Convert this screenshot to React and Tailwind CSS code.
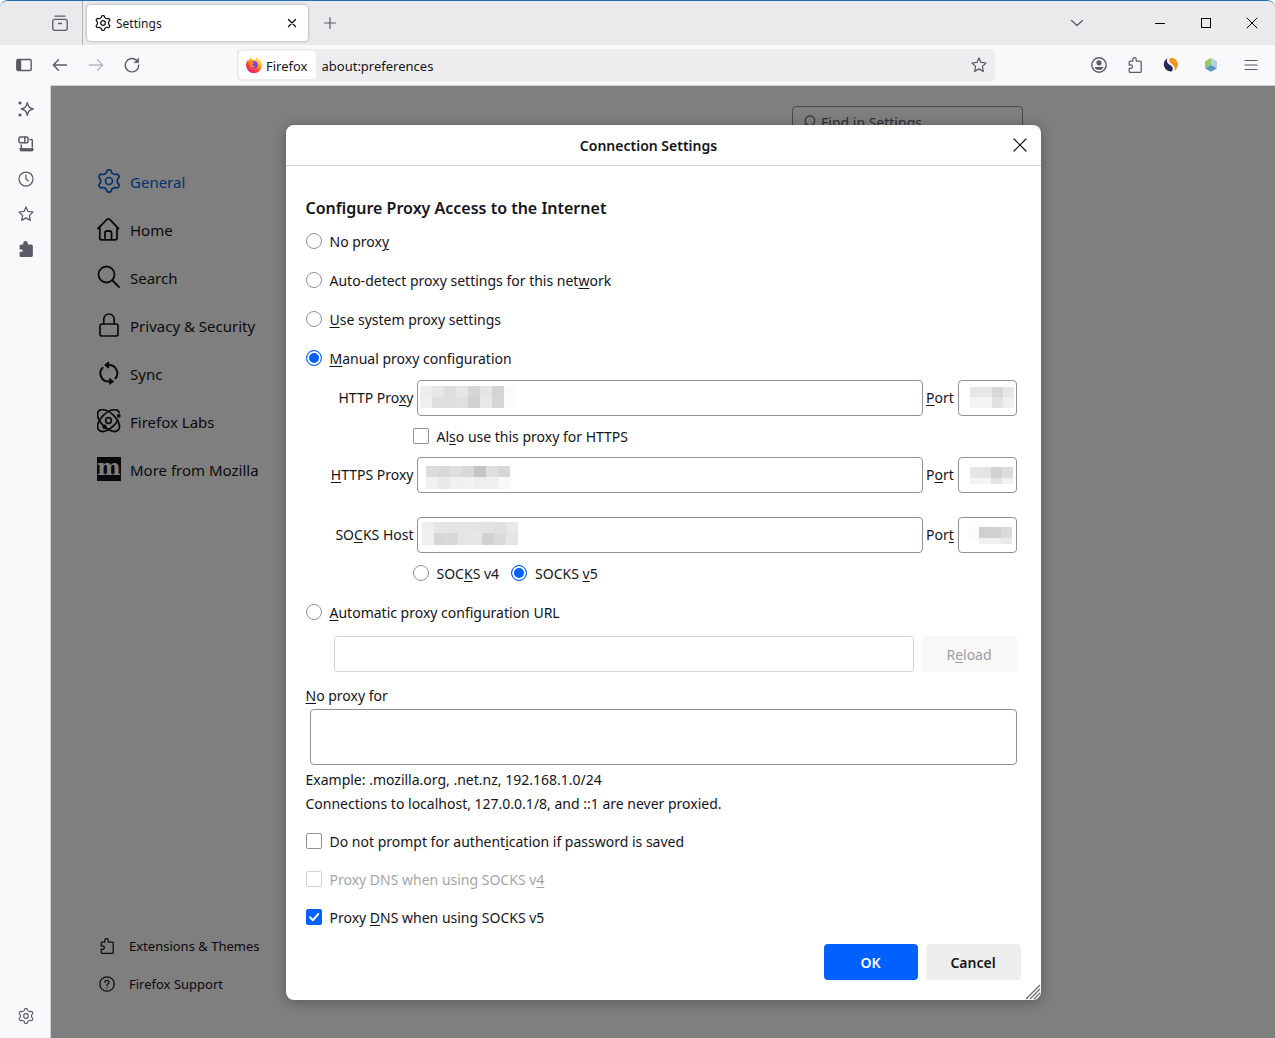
import React from "react";

const gearPath = (() => {
  const pts = [];
  for (let i = 0; i < 96; i++) {
    const a = (i / 96) * Math.PI * 2;
    const r = 9.8 + 1.5 * Math.tanh(1.9 * (Math.cos(6 * a) - 0.15));
    pts.push(`${(12 + r * Math.sin(a)).toFixed(2)} ${(12 - r * Math.cos(a)).toFixed(2)}`);
  }
  return `M${pts.join("L")}Z`;
})();

function Icon({ size = 16, box = 16, sw = 1.25, className = "", children }) {
  return (
    <svg
      width={size}
      height={size}
      viewBox={`0 0 ${box} ${box}`}
      fill="none"
      stroke="currentColor"
      strokeWidth={sw}
      strokeLinecap="round"
      strokeLinejoin="round"
      aria-hidden="true"
      className={`shrink-0 ${className}`}
    >
      {children}
    </svg>
  );
}

const Gear = ({ size = 16, sw = 2 }) => (
  <Icon size={size} box={24} sw={sw}>
    <path d={gearPath} />
    <circle cx="12" cy="12" r="3.5" />
  </Icon>
);

const Star = () => (
  <Icon>
    <path d="M8 .9 10 5.4l5 .6-3.6 3.4.9 5-4.3-2.500-4.3 2.500.9-5L1 6l5-.6z" />
  </Icon>
);

const puzzle = "M2.2 5.600V5c0-.6.4-1 1-1h2.600V2.400a1.700 1.700 0 0 1 3.400 0V4h4c.6 0 1 .4 1 1v9.400c0 .6-.4 1-1 1h-10c-.6 0-1-.4-1-1v-3h1.400a1.700 1.700 0 0 0 0-3.500H2.200z";

const Puzzle = ({ filled }) => (
  <Icon>
    <path d={puzzle} fill={filled ? "currentColor" : "none"} />
  </Icon>
);

const FirefoxLogo = () => (
  <svg width="16" height="16" viewBox="0 0 16 16" aria-hidden="true" className="shrink-0">
    <defs>
      <linearGradient id="flame" x1="0.85" y1="0.05" x2="0.2" y2="0.95">
        <stop offset="0" stopColor="#fff36b" />
        <stop offset="0.35" stopColor="#ffae22" />
        <stop offset="0.65" stopColor="#ff4a37" />
        <stop offset="1" stopColor="#e31587" />
      </linearGradient>
    </defs>
    <path
      d="M1.3 3.2c.3.3.5.6.6.9.6-.7 1.4-1.2 2-1.5C4 1.500 4.500.7 4.900.5c0 .8.5 1.400 1.300 1.900L9.500 3c.2-1.300.8-2.300 1.600-3 .2 1.500 1.600 2.400 2.500 3.900.3-.3.3-.8.2-1.200C15.200 4 16 6 16 8.100A8 8 0 0 1 0 8.300c0-2.300.6-3.800 1.300-5.100z"
      fill="url(#flame)"
    />
    <circle cx="8.300" cy="7.800" r="3.500" fill="#7542e5" />
    <path d="M3.200 5.500c1.200-.6 2.300-.5 3.300.1l2 .3c-.3 1-1.600 1-2 1.600-.2 1.500 1.700 2 3.300 1.200-1.600 2.700-6 2-6.300-1z" fill="#ff8a1c" />
  </svg>
);

const U = ({ children }) => <span className="underline underline-offset-2">{children}</span>;

const Radio = ({ id, name, checked, children }) => (
  <label htmlFor={id} className="flex items-center gap-2">
    <input
      id={id}
      type="radio"
      name={name}
      defaultChecked={checked}
      className="size-4 shrink-0 appearance-none rounded-full border border-[#8f8f9d] bg-white checked:border-[#0061fe] checked:bg-[#0061fe] checked:shadow-[inset_0_0_0_2px_white]"
    />
    <span className="pt-0.5">{children}</span>
  </label>
);

const Check = ({ id, checked, disabled, children }) => (
  <label htmlFor={id} className={`flex items-center gap-2 ${disabled ? "opacity-40" : ""}`}>
    <span className="relative flex size-4 shrink-0">
      <input
        id={id}
        type="checkbox"
        defaultChecked={checked}
        disabled={disabled}
        className="peer size-4 appearance-none rounded-xs border border-[#8f8f9d] bg-white checked:border-[#0061fe] checked:bg-[#0061fe]"
      />
      <svg viewBox="0 0 16 16" aria-hidden="true" className="pointer-events-none absolute inset-0 hidden size-4 peer-checked:block">
        <path d="M4 8.300 7 11.200 12.300 5" fill="none" stroke="white" strokeWidth="2" strokeLinecap="round" strokeLinejoin="round" />
      </svg>
    </span>
    <span className="pt-0.5">{children}</span>
  </label>
);

const field = "block w-full rounded border border-[#8f8f9d] bg-white px-2";

function Mosaic({ rows, className }) {
  return (
    <span aria-hidden="true" className={`pointer-events-none absolute flex flex-col ${className}`}>
      {rows.map((row, i) => (
        <span key={i} className="flex min-h-0 flex-1">
          {row.map((c, j) => (
            <span key={j} className="flex-1" style={{ backgroundColor: c }} />
          ))}
        </span>
      ))}
    </span>
  );
}

function ProxyRow({ id, label, port, host, hostBox, portCells, portBox }) {
  return (
    <div className="flex items-center gap-[3px] pr-1">
      <label htmlFor={id} className="w-[108px] shrink-0 text-right">{label}</label>
      <div className="relative flex-1">
        <input id={id} type="text" className={`${field} h-9`} />
        <Mosaic rows={host} className={hostBox} />
      </div>
      <label htmlFor={`${id}-port`} className="w-[29px] shrink-0 text-center whitespace-nowrap">{port}</label>
      <div className="relative w-[59px] shrink-0">
        <input id={`${id}-port`} type="text" className={`${field} h-9`} />
        <Mosaic rows={portCells} className={portBox} />
      </div>
    </div>
  );
}

const categories = [
  ["General", <Gear size={24} sw={1.7} />],
  ["Home", (
    <Icon size={24} box={24} sw={1.8}>
      <path d="M1 11.500 10.100 2.400a1.800 1.800 0 0 1 2.600 0l8.800 9.100M2.800 10v11a1.800 1.800 0 0 0 1.800 1.800h13.600a1.800 1.800 0 0 0 1.800-1.800V10M8 22.500V16a2 2 0 0 1 2-2h2.500a2 2 0 0 1 2 2v6.500" />
    </Icon>
  )],
  ["Search", (
    <Icon size={24} box={24} sw={1.8}>
      <circle cx="9.500" cy="9.500" r="8" />
      <path d="m15.500 15.500 6.500 6.500" />
    </Icon>
  )],
  ["Privacy & Security", (
    <Icon size={24} box={24} sw={1.7}>
      <rect x="3" y="11" width="18" height="12" rx="2" />
      <path d="M6.800 11V6.200a5.200 5.200 0 0 1 10.400 0V11" />
    </Icon>
  )],
  ["Sync", (
    <Icon size={24} box={24} sw={2}>
      <path d="M12 4a8.200 8.200 0 0 1 6.500 13.300M12 20.500A8.200 8.200 0 0 1 5.600 6.700" />
      <path d="M11.500 1.200v5.600L8 4zM12.800 17.700v5.300l3.400-2.600z" fill="currentColor" strokeWidth="1.300" />
    </Icon>
  )],
  ["Firefox Labs", (
    <Icon size={24} box={24} sw={1.8}>
      <circle cx="11.500" cy="11.500" r="2.800" />
      <ellipse cx="11.500" cy="11.500" rx="13.600" ry="7.400" transform="rotate(-45 11.500 11.500)" pathLength="100" strokeDasharray="3 12 85" />
      <ellipse cx="11.500" cy="11.500" rx="13.600" ry="7.400" transform="rotate(45 11.500 11.500)" />
      <circle cx="7.500" cy="17.800" r="1.300" fill="currentColor" />
      <circle cx="21.800" cy="6.800" r="1" fill="currentColor" />
    </Icon>
  )],
  ["More from Mozilla", (
    <svg width="24" height="24" viewBox="0 0 24 24" aria-hidden="true" className="shrink-0 overflow-visible">
      <rect width="24" height="24" fill="#15141a" />
      <text x="12" y="18" textAnchor="middle" fontFamily="DejaVu Serif" fontWeight="700" fontSize="22" fill="#fff">m</text>
    </svg>
  )],
];

const iconButton = "flex size-8 items-center justify-center";

export default function App() {
  return (
    <div className="flex min-h-screen flex-col overflow-hidden rounded-t-lg border-t border-[#1a6fb5] bg-[#f9f9fb] font-['Noto_Sans',sans-serif] text-sm text-[#15141a]">
      <header className="flex h-11 items-center bg-[#eaeaec] text-[#5b5b66]">
        <div className="flex w-[83px] justify-end self-stretch border-r border-[#b5b5ba] pr-1.5">
          <button aria-label="View recent browsing" className="flex w-8 items-center justify-center">
            <Icon sw={1.3}>
              <rect x=".8" y="4.300" width="14.400" height="11" rx="2" />
              <path d="M3 1.200h10M6.500 8.500h3" />
            </Icon>
          </button>
        </div>
        <div className="ml-1 flex h-9 w-[221px] items-center gap-[5px] rounded bg-white pr-2 pl-2 text-[#15141a] shadow-[0_0_3px_rgba(0,0,0,0.35)]">
          <Gear sw={1.9} />
          <span className="flex-1 pt-0.5 text-xs">Settings</span>
          <button aria-label="Close tab" className="flex size-4 items-center justify-center">
            <Icon size={10} box={10} sw={1.4}><path d="m1.500 1.500 7 7m0-7-7 7" /></Icon>
          </button>
        </div>
        <button aria-label="New tab" className="ml-1.5 flex size-8 items-center justify-center">
          <Icon size={14} box={14} sw={1.2}><path d="M7 1.500v11M1.500 7h11" /></Icon>
        </button>
        <div className="flex-1" />
        <button aria-label="List all tabs" className="mr-11 flex size-8 items-center justify-center">
          <Icon size={14} box={14} sw={1.3}><path d="m1.500 4.500 5.500 5 5.500-5" /></Icon>
        </button>
        <div className="flex self-stretch text-black">
          <button aria-label="Minimize" className="flex w-[46px] items-center justify-center">
            <span className="h-px w-2.5 bg-black" />
          </button>
          <button aria-label="Maximize" className="flex w-[46px] items-center justify-center">
            <span className="size-2.5 border border-black" />
          </button>
          <button aria-label="Close" className="flex w-[46px] items-center justify-center">
            <Icon size={12} box={12} sw={1}><path d="m1 1 10 10m0-10L1 11" /></Icon>
          </button>
        </div>
      </header>

      <nav aria-label="Navigation" className="flex h-10 items-center pr-2 pl-2 text-[#5b5b66]">
        <div className="flex gap-1">
          <button aria-label="Sidebar" className={iconButton}>
            <Icon sw={1.4}>
              <rect x=".8" y="2.500" width="14.400" height="11" rx="1.500" />
              <path d="M1.500 3.500h3v9h-3z" fill="currentColor" />
            </Icon>
          </button>
          <button aria-label="Back" className={iconButton}>
            <Icon sw={1.4}><path d="M14.500 8H1.500M6.500 2.800 1.300 8l5.200 5.200" /></Icon>
          </button>
          <button aria-label="Forward" disabled className={`${iconButton} opacity-40`}>
            <Icon sw={1.4}><path d="M1.500 8h13M9.500 2.800 14.700 8l-5.200 5.200" /></Icon>
          </button>
          <button aria-label="Reload page" className={iconButton}>
            <Icon sw={1.4}>
              <path d="M14.700 8.200A6.700 6.700 0 1 1 12.500 3.200" />
              <path d="M14.700 1.200v4.500h-4.500z" fill="currentColor" strokeWidth=".5" />
            </Icon>
          </button>
        </div>
        <div className="ml-[89px] flex h-8 flex-1 items-center rounded bg-[#ededf0] text-[#15141a]">
          <div className="m-0.5 flex h-7 items-center gap-1 rounded bg-white pr-2 pl-[7px]">
            <FirefoxLogo />
            <span className="pt-0.5 text-[13px]">Firefox</span>
          </div>
          <input aria-label="Address" type="text" defaultValue="about:preferences" className="ml-1 min-w-0 flex-1 bg-transparent pt-0.5 text-[13px]" />
          <button aria-label="Bookmark this page" className={`${iconButton} text-[#5b5b66]`}><Star /></button>
        </div>
        <div className="ml-[88px] flex">
          <button aria-label="Account" className={iconButton}>
            <Icon sw={1.4}>
              <circle cx="8" cy="8" r="7.200" />
              <circle cx="8" cy="5.900" r="1.900" fill="currentColor" />
              <path d="M4.500 10.600h7c-.6 1-1.900 1.700-3.500 1.700s-2.900-.7-3.500-1.700z" fill="currentColor" />
            </Icon>
          </button>
          <button aria-label="Extensions" className={`${iconButton} ml-1`}><Puzzle /></button>
          <button aria-label="Similarweb" className={`${iconButton} ml-1`}>
            <svg width="16" height="16" viewBox="0 0 16 16" aria-hidden="true">
              <path d="M4.500 1.200C1.500 3 0 6.300 1.300 9.800c1.200 3.400 4.300 5 7.500 4.500C11 12 9.500 9.500 7 8 4.600 6.500 3 4 4.500 1.200z" fill="#1f2b5b" />
              <path d="M7 1.200c4-.6 7 1.500 7.800 4.800.7 3.200-.8 6.200-3.300 7.800 1-3-.5-5.300-2.800-6.800C6.300 5.500 5.500 3.200 7 1.200z" fill="#f7931e" />
            </svg>
          </button>
          <button aria-label="Cube extension" className={`${iconButton} ml-2`}>
            <svg width="16" height="16" viewBox="0 0 16 16" aria-hidden="true">
              <path d="M8 1 2 4.300v7L8 8z" fill="#94c96b" />
              <path d="m8 1 6 3.300v7L8 8z" fill="#b4cfe4" />
              <path d="m2 11.300 6 3.500 6-3.500L8 8z" fill="#5b94c4" />
            </svg>
          </button>
          <button aria-label="Menu" className={`${iconButton} ml-2`}>
            <Icon size={14} box={14} sw={1.2}><path d="M1 2.500h12M1 7h12M1 11.500h12" /></Icon>
          </button>
        </div>
      </nav>

      <div className="flex flex-1">
        <aside className="flex w-[51px] shrink-0 flex-col items-center justify-between border-t border-r border-t-[#f9f9fb] border-r-[#d0d0d4] pt-[7px] pb-1.5 pl-0.5 text-[#5b5b66]">
          <div className="flex flex-col gap-[3px]">
            <button aria-label="AI chatbot" className={iconButton}>
              <Icon sw={1.4}>
                <path d="M9.300 1.700c.9 4 2 5.200 5.900 6.300-3.900 1.100-5 2.300-5.900 6.300C8.400 10.300 7.200 9.100 3.400 8 7.200 6.900 8.400 5.700 9.300 1.700z" />
                <circle cx="2" cy="2" r=".9" fill="currentColor" />
                <circle cx="2" cy="14" r=".9" fill="currentColor" />
              </Icon>
            </button>
            <button aria-label="Synced tabs" className={iconButton}>
              <Icon sw={1.5}>
                <rect x="1" y="1" width="9" height="5.800" rx="1.200" />
                <path d="M6.800 1v5.800M12 3.500h1.300c.6 0 1 .4 1 1V11M3.300 9v2.500" />
                <path d="M2 12.500h13.200v1.200c0 .8-.5 1.300-1.200 1.300H3.200c-.7 0-1.200-.5-1.200-1.300z" fill="currentColor" strokeWidth=".8" />
              </Icon>
            </button>
            <button aria-label="History" className={iconButton}>
              <Icon><circle cx="8" cy="8" r="7" /><path d="M8 4v4.300l2.300 1.500" /></Icon>
            </button>
            <button aria-label="Bookmarks" className={iconButton}><Star /></button>
            <button aria-label="Add-ons" className={iconButton}><Puzzle filled /></button>
          </div>
          <button aria-label="Customize sidebar" className={iconButton}><Gear sw={1.7} /></button>
        </aside>

        <main className="relative flex flex-1 border-t border-[#d0d0d4] bg-white">
          <div className="flex w-[235px] flex-col justify-between pt-[71px] pb-[35px] pl-[46px]">
            <ul className="flex flex-col text-[15px]">
              {categories.map(([name, icon], i) => (
                <li key={name}>
                  <a href={`#${i}`} className={`flex h-12 items-center gap-[9px] whitespace-nowrap ${i === 0 ? "text-[#0061e0]" : ""}`}>
                    {icon}
                    <span className="pt-1">{name}</span>
                  </a>
                </li>
              ))}
            </ul>
            <ul className="flex flex-col text-[13px]">
              <li>
                <a href="#addons" className="flex h-[38px] items-center gap-3.5 whitespace-nowrap pl-0.5"><Puzzle />Extensions &amp; Themes</a>
              </li>
              <li>
                <a href="#support" className="flex h-[38px] items-center gap-3.5 whitespace-nowrap pl-0.5">
                  <Icon>
                    <circle cx="8" cy="8" r="7.200" />
                    <path d="M6 6.300c0-2.600 4-2.600 4 0 0 1.500-2 1.500-2 3.100M8 11.700v.1" />
                  </Icon>
                  Firefox Support
                </a>
              </li>
            </ul>
          </div>
          <div className="flex flex-1 justify-end pt-5 pr-[252px]">
            <label className="flex h-8 w-[231px] items-center gap-1 rounded border border-[#8f8f9d] px-2.5 text-[#5b5b66]">
              <Icon size={14} className="-scale-x-100"><circle cx="8" cy="6.500" r="5.500" /><path d="m12 10.500 3.500 4" /></Icon>
              <input type="search" aria-label="Find in Settings" placeholder="Find in Settings" className="min-w-0 flex-1 pt-0.5 placeholder:text-[#5b5b66]" />
            </label>
          </div>

          <div className="absolute inset-0 flex items-center justify-center bg-black/50">
            <section role="dialog" aria-labelledby="dialog-title" className="relative w-full max-w-[755px] rounded-lg bg-white shadow-[0_2px_14px_rgba(0,0,0,0.3)]">
              <header className="flex h-[41px] items-center border-b border-[#d7d7db] pr-[5px]">
                <h1 id="dialog-title" className="flex-1 pt-0.5 pl-2 text-center font-semibold">Connection Settings</h1>
                <button aria-label="Close dialog" className="flex size-8 items-center justify-center">
                  <Icon size={14} box={14} sw={1.2}><path d="m1 1 12 12m0-12L1 13" /></Icon>
                </button>
              </header>
              <form className="flex flex-col px-5 pt-[30px] pb-5">
                <h2 className="mb-0.5 text-base font-semibold">Configure Proxy Access to the Internet</h2>
                <div className="grid auto-rows-[39px] items-center">
                  <Radio id="p0" name="proxy">No prox<U>y</U></Radio>
                  <Radio id="p1" name="proxy">Auto-detect proxy settings for this net<U>w</U>ork</Radio>
                  <Radio id="p2" name="proxy"><U>U</U>se system proxy settings</Radio>
                  <Radio id="p3" name="proxy" checked><U>M</U>anual proxy configuration</Radio>
                </div>
                <div className="mt-0.5 flex flex-col">
                  <ProxyRow
                    id="http"
                    label={<>HTTP Pro<U>x</U>y</>}
                    port={<><U>P</U>ort</>}
                    hostBox="top-1.5 left-[3px] h-[22px] w-24"
                    host={[
                      ["#ededed", "#e6e6e6", "#dcdde0", "#e6e6e6", "#d8d5d6", "#e6e5e6", "#d5d4d5", "#fafcfc"],
                      ["#f0f0f0", "#dedede", "#dfdfdf", "#e0e0e0", "#d3d0d1", "#e8e8e8", "#d5d5d5", "#fbfcfd"],
                    ]}
                    portBox="top-[7px] left-3 h-[21px] w-11"
                    portCells={[["#e8e7e8", "#e6e7e7", "#d8d7d8", "#e6e6e7"], ["#f3f3f3", "#f4f4f4", "#e3e1e1", "#efeff0"]]}
                  />
                  <div className="flex h-[41px] items-center pl-[107px]">
                    <Check id="also">Al<U>s</U>o use this proxy for HTTPS</Check>
                  </div>
                  <ProxyRow
                    id="https"
                    label={<><U>H</U>TTPS Proxy</>}
                    port={<>P<U>o</U>rt</>}
                    hostBox="top-[9px] left-[9px] h-[23px] w-[84px]"
                    host={[
                      ["#dcdcdc", "#d8d9d9", "#dedede", "#d9d9d9", "#c5c5c5", "#dedfdf", "#d5d7d7"],
                      ["#f0f0f0", "#e8e9e9", "#f0f0f0", "#f1f2f4", "#eeeeee", "#efefef", "#f8f8f8"],
                    ]}
                    portBox="top-2.5 left-3 h-[17px] w-[43px]"
                    portCells={[["#e8e5e7", "#e2e4e5", "#d3d2d3", "#dcdcdd"], ["#e8e5e7", "#e2e4e5", "#d3d2d3", "#dcdcdd"], ["#f3f3f3", "#f4f4f4", "#e3e3e3", "#f1f1f1"]]}
                  />
                  <div className="mt-6">
                    <ProxyRow
                      id="socks"
                      label={<>SO<U>C</U>KS Host</>}
                      port={<>Por<U>t</U></>}
                      hostBox="top-[5px] left-[5px] h-[23px] w-24"
                      host={[
                        ["#efefef", "#e5e5e5", "#e3e5e5", "#e5e5e5", "#e4e4e5", "#e2e2e3", "#dee0e1", "#e8e8e8"],
                        ["#efefef", "#d5d8d8", "#d7d8d9", "#e6e5e4", "#e7e7e7", "#d0d1d1", "#d9dbdb", "#e5e5e5"],
                      ]}
                      portBox="top-2.5 left-2.5 h-[17px] w-11"
                      portCells={[["#fbfbfb", "#cfcfcf", "#d1d0d1", "#d9dada"], ["#fbfbfb", "#cfcfcf", "#d1d0d1", "#d9dada"], ["#fefefe", "#f0f0f0", "#f0f0f0", "#e8eaea"]]}
                    />
                  </div>
                  <div className="flex h-10 items-center gap-3 pl-[107px]">
                    <Radio id="v4" name="socks-version">SOC<U>K</U>S v4</Radio>
                    <Radio id="v5" name="socks-version" checked>SOCKS <U>v</U>5</Radio>
                  </div>
                </div>
                <div className="flex h-[39px] items-center">
                  <Radio id="p4" name="proxy"><U>A</U>utomatic proxy configuration URL</Radio>
                </div>
                <div className="mt-1 flex gap-2 pr-1 pl-7">
                  <input type="text" aria-label="Automatic proxy configuration URL" disabled className="h-9 min-w-0 flex-1 rounded border border-[#d2d2d8] bg-white px-2" />
                  <button type="button" disabled className="h-9 w-[95px] rounded bg-[#f8f8f9] pt-0.5 text-[#a0a0a4]">R<U>e</U>load</button>
                </div>
                <label htmlFor="noproxy" className="mt-3 leading-6"><U>N</U>o proxy for</label>
                <div className="mt-px px-1">
                  <textarea id="noproxy" className="block h-14 w-full resize-none rounded border border-[#8f8f9d] bg-white px-2 py-1" />
                </div>
                <p className="mt-[3px] leading-6">Example: .mozilla.org, .net.nz, 192.168.1.0/24</p>
                <p className="leading-6">Connections to localhost, 127.0.0.1/8, and ::1 are never proxied.</p>
                <div className="mt-1.5 grid auto-rows-[38px] items-center">
                  <Check id="c1">Do not prompt for authent<U>i</U>cation if password is saved</Check>
                  <Check id="c2" disabled>Proxy DNS when using SOCKS v<U>4</U></Check>
                  <Check id="c3" checked>Proxy <U>D</U>NS when using SOCKS v5</Check>
                </div>
                <div className="mt-2 flex justify-end gap-2 font-semibold">
                  <button type="button" className="h-9 w-[94px] rounded bg-[#0061fe] pt-0.5 text-white">OK</button>
                  <button type="button" className="h-9 w-[95px] rounded bg-[#eeeeef] pt-0.5">Cancel</button>
                </div>
              </form>
              <svg width="16" height="16" viewBox="0 0 16 16" aria-hidden="true" className="absolute right-0 bottom-0">
                <path d="M1 15 15 1M5 15 15 5M9 15l6-6M13 15l2-2" stroke="#6a6a6a" strokeWidth="1.200" />
              </svg>
            </section>
          </div>
        </main>
      </div>
    </div>
  );
}
